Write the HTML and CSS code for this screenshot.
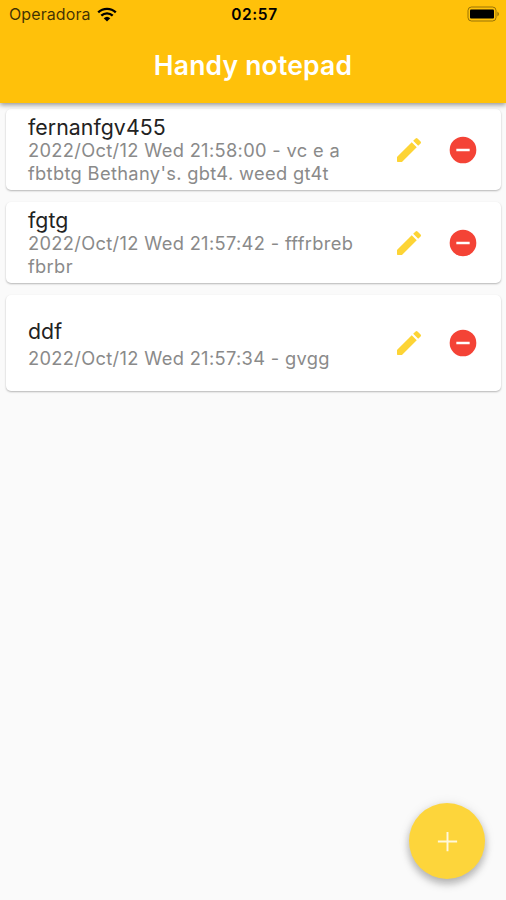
FILE: index.html
```
<!DOCTYPE html>
<html lang="en">
<head>
    <meta charset="utf-8">
    <title>Handy notepad</title>
    <link rel="stylesheet" href="styles.css">
</head>
<body>
    <svg width="0" height="0" class="sprite">
        <symbol id="edit" viewBox="0 0 24 24">
            <path d="M3 17.46v3.04c0 .28.22.5.5.5h3.04c.13 0 .26-.05.35-.15L17.81 9.94l-3.75-3.75L3.15 17.1c-.1.1-.15.22-.15.36zM20.71 7.04a1 1 0 0 0 0-1.41l-2.34-2.34a1 1 0 0 0-1.41 0l-1.83 1.83 3.75 3.75 1.83-1.83z"/>
        </symbol>
        <symbol id="remove" viewBox="0 0 24 24">
            <path d="M12 2a10 10 0 1 0 0 20 10 10 0 0 0 0-20zm5 11H7v-2h10v2z"/>
        </symbol>
    </svg>

    <header class="app-bar">
        <div class="status-bar">
            <div class="carrier">
                <span>Operadora</span>
                <svg class="wifi" viewBox="0 0 20 15">
                    <path d="M1.2 5.4a12.6 12.6 0 0 1 17.6 0M4.3 8.6a8.2 8.2 0 0 1 11.4 0" fill="none" stroke="#000" stroke-width="2.3"/>
                    <path d="M6.7 11.2a4.8 4.8 0 0 1 6.6 0L10 14.5z"/>
                </svg>
            </div>
            <span class="time">02:57</span>
            <svg class="battery" viewBox="0 0 34 16">
                <rect x="2" y="1" width="28" height="14" rx="3.5" fill="none" stroke="#000" stroke-opacity=".4"/>
                <rect x="4" y="3.5" width="24" height="9" rx="1"/>
                <path d="M31.5 5.5q2.6 2.5 0 5z" fill-opacity=".5"/>
            </svg>
        </div>
        <h1>Handy notepad</h1>
    </header>

    <main class="notes">
        <div class="card">
            <div class="text">
                <div class="title">fernanfgv455</div>
                <div class="sub">2022/Oct/12 Wed 21:58:00 - vc e a<br>fbtbtg Bethany's. gbt4. weed gt4t</div>
            </div>
            <svg class="icon edit"><use href="#edit"/></svg>
            <svg class="icon remove"><use href="#remove"/></svg>
        </div>
        <div class="card">
            <div class="text">
                <div class="title">fgtg</div>
                <div class="sub">2022/Oct/12 Wed 21:57:42 - fffrbreb<br>fbrbr</div>
            </div>
            <svg class="icon edit"><use href="#edit"/></svg>
            <svg class="icon remove"><use href="#remove"/></svg>
        </div>
        <div class="card tall">
            <div class="text">
                <div class="title">ddf</div>
                <div class="sub">2022/Oct/12 Wed 21:57:34 - gvgg</div>
            </div>
            <svg class="icon edit"><use href="#edit"/></svg>
            <svg class="icon remove"><use href="#remove"/></svg>
        </div>
    </main>

    <button class="fab" aria-label="Add">
        <svg viewBox="0 0 24 24"><path d="M19 12.7h-6.3V19h-1.4v-6.3H5v-1.4h6.3V5h1.4v6.3H19z"/></svg>
    </button>
</body>
</html>
```

FILE: styles.css
```
body {
    margin: 0;
    height: 900px;
    overflow: hidden;
    background-color: #fafafa;
    font-family: Inter, "Liberation Sans", sans-serif;
}
.sprite {
    position: absolute;
}
.app-bar {
    position: relative;
    height: 103px;
    background-color: #ffc10a;
    box-shadow: 0 2px 5px rgba(0,0,0,0.4);
}
.status-bar {
    display: grid;
    grid-template-columns: 1fr auto 1fr;
    align-items: center;
    height: 28px;
    padding: 0 6px 0 9px;
    font-size: 16px;
}
.carrier {
    display: flex;
    align-items: center;
    gap: 6px;
    color: rgba(0,0,0,0.75);
    letter-spacing: 0.1px;
}
.wifi {
    width: 20px;
    height: 15px;
}
.time {
    font-weight: 600;
    font-size: 15.5px;
    letter-spacing: 0.6px;
}
.battery {
    justify-self: end;
    width: 34px;
    height: 16px;
}
h1 {
    margin: 0;
    line-height: 75px;
    text-align: center;
    font-size: 26.5px;
    font-weight: 600;
    letter-spacing: 0.2px;
    color: #fff;
}
.notes {
    display: flex;
    flex-direction: column;
    gap: 12px;
    padding: 6px 5px 0 6px;
}
.card {
    display: flex;
    align-items: center;
    box-sizing: border-box;
    height: 81px;
    padding: 0 22px;
    background-color: #fff;
    border-radius: 5px;
    box-shadow: 0 1px 2px rgba(0,0,0,0.28);
}
.card.tall {
    height: 96px;
}
.text {
    flex: 1;
    white-space: nowrap;
}
.title {
    line-height: 24px;
    font-size: 21.3px;
    letter-spacing: 0.05px;
    color: #222;
}
.sub {
    line-height: 23px;
    font-size: 18.3px;
    letter-spacing: 0.33px;
    color: #8a8a8a;
}
.tall .text {
    padding-top: 2px;
}
.tall .sub {
    margin-top: 4px;
}
.icon {
    width: 32px;
    height: 32px;
}
.edit {
    margin-right: 22px;
    fill: #fdd435;
}
.remove {
    fill: #f44336;
}
.fab {
    position: fixed;
    right: 21px;
    bottom: 21px;
    display: flex;
    align-items: center;
    justify-content: center;
    width: 76px;
    height: 76px;
    border: none;
    border-radius: 50%;
    background-color: #fdd53b;
    box-shadow: 0 5px 8px rgba(0,0,0,0.26), 0 1px 12px rgba(0,0,0,0.1);
}
.fab svg {
    width: 33px;
    height: 33px;
    fill: #fff8dc;
}
```
